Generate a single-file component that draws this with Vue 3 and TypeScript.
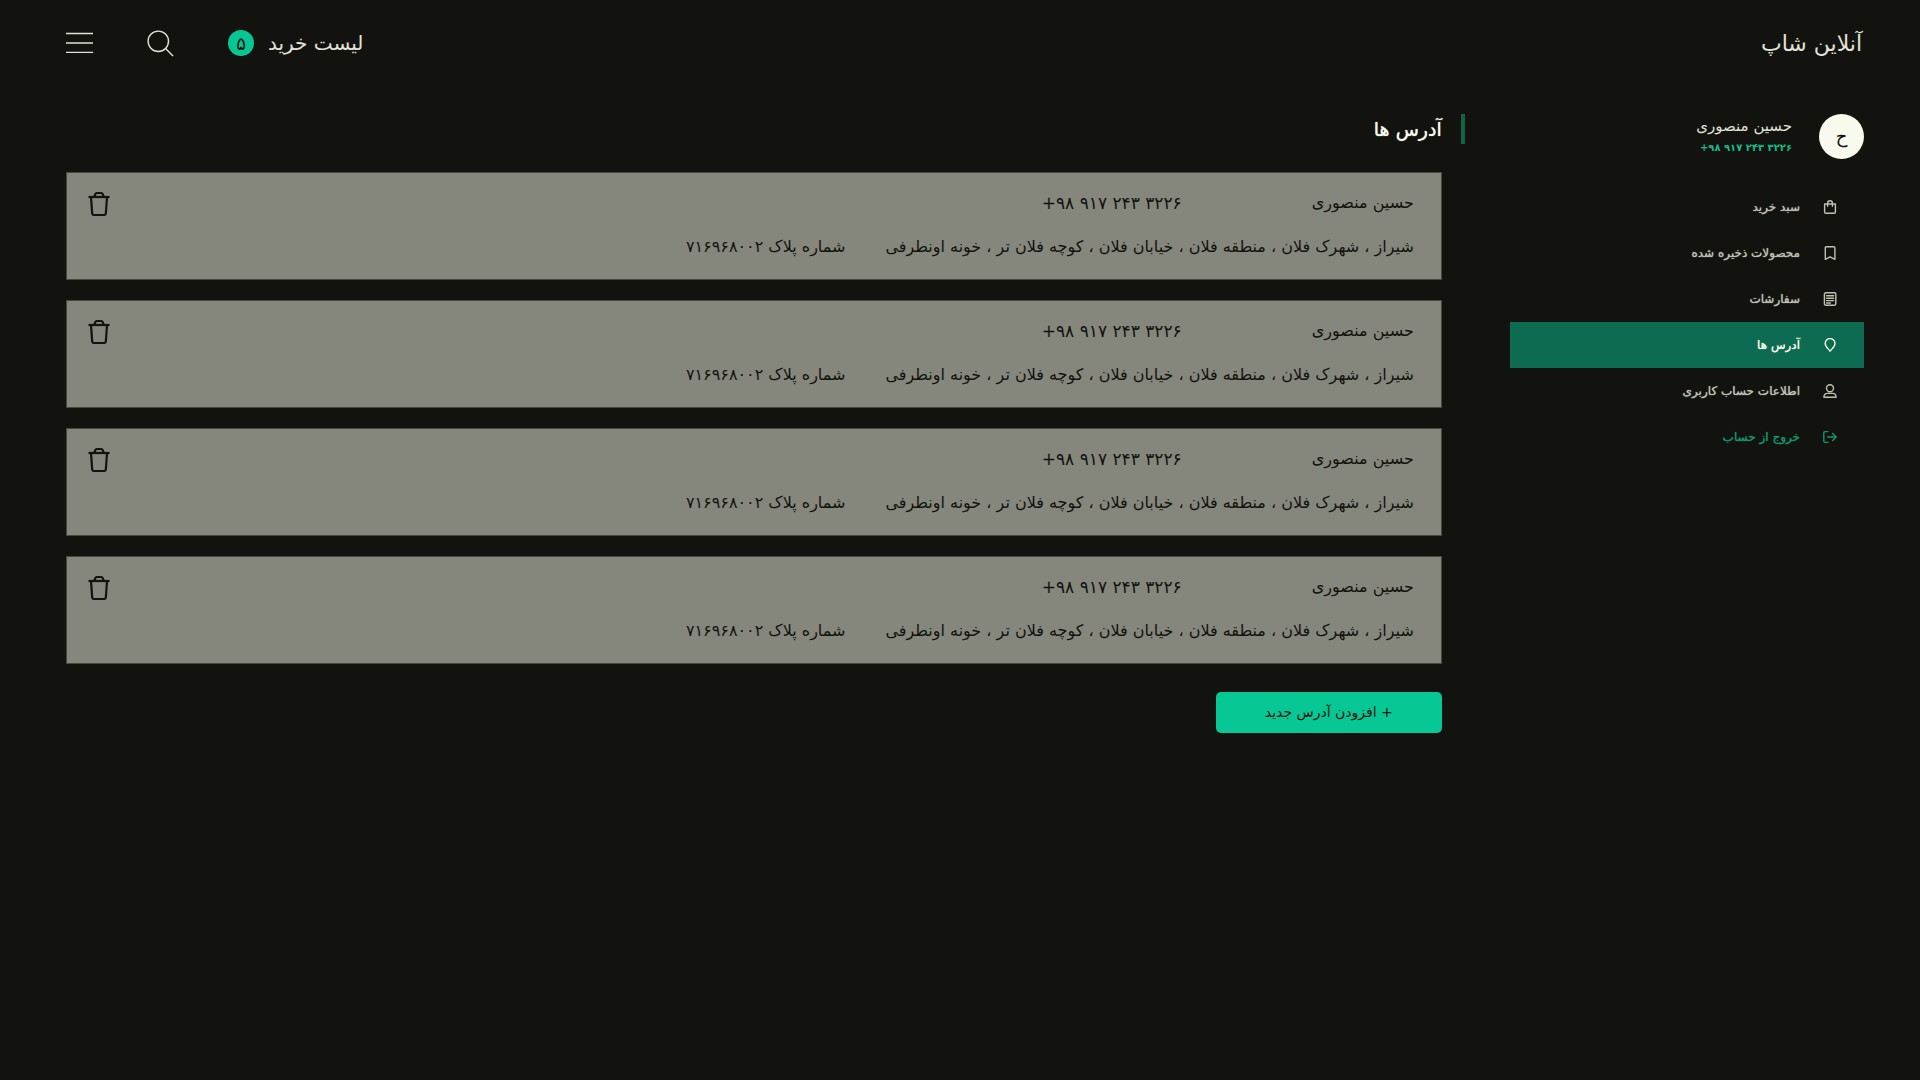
<script setup lang="ts">
interface MenuItem {
  id: string
  label: string
}

interface Address {
  id: number
  name: string
  phone: string
  address: string
  plate: string
}

const userName = 'حسین منصوری'
const userPhone = '+۹۸ ۹۱۷ ۲۴۳ ۳۲۲۶'

const menu: MenuItem[] = [
  { id: 'cart', label: 'سبد خرید' },
  { id: 'saved', label: 'محصولات ذخیره شده' },
  { id: 'orders', label: 'سفارشات' },
  { id: 'addresses', label: 'آدرس ها' },
  { id: 'account', label: 'اطلاعات حساب کاربری' },
  { id: 'logout', label: 'خروج از حساب' },
]

const addresses: Address[] = [1, 2, 3, 4].map((id) => ({
  id,
  name: userName,
  phone: userPhone,
  address: 'شیراز ، شهرک فلان ، منطقه فلان ، خیابان فلان ، کوچه فلان تر ، خونه اونطرفی',
  plate: 'شماره پلاک ۷۱۶۹۶۸۰۰۲',
}))
</script>

<template>
  <div class="page" dir="rtl" lang="fa">
    <header class="header">
      <a class="brand" href="#">آنلاین شاپ</a>
      <div class="tools">
        <a class="basket" href="#">
          <span>لیست خرید</span>
          <span class="count">۵</span>
        </a>
        <button class="icon-button" type="button" aria-label="جستجو">
          <svg width="27" height="27" viewBox="0 0 27 27" fill="none" stroke="currentColor" stroke-width="1.4">
            <circle cx="11.3" cy="11.3" r="10.2" />
            <path d="M18.6 18.6L26 26" />
          </svg>
        </button>
        <button class="icon-button" type="button" aria-label="منو">
          <svg width="27" height="27" viewBox="0 0 27 27" fill="none" stroke="currentColor" stroke-width="1.3">
            <path d="M0 3.5H27M0 13H27M0 22.4H27" />
          </svg>
        </button>
      </div>
    </header>

    <div class="body">
      <aside class="sidebar">
        <div class="profile">
          <span class="avatar">ح</span>
          <div class="identity">
            <span class="user-name">{{ userName }}</span>
            <span class="user-phone" dir="ltr">{{ userPhone }}</span>
          </div>
        </div>
        <nav class="menu">
          <a
            v-for="item in menu"
            :key="item.id"
            href="#"
            class="menu-item"
            :class="{ active: item.id === 'addresses', logout: item.id === 'logout' }"
          >
            <svg width="14" height="14" viewBox="0 0 14 14" fill="none" stroke="currentColor" stroke-width="1.4" stroke-linejoin="round" stroke-linecap="round">
              <template v-if="item.id === 'cart'">
                <path d="M1.6 4H12.4V12Q12.4 13.3 11.1 13.3H2.9Q1.6 13.3 1.6 12Z" />
                <path d="M4.6 6.3V3.2A2.4 2.4 0 0 1 9.4 3.2V6.3" />
              </template>
              <path v-else-if="item.id === 'saved'" d="M2.3 13.3V1.9Q2.3.7 3.5.7H10.7Q11.9.7 11.9 1.9V13.3L7.1 10.8Z" />
              <template v-else-if="item.id === 'orders'">
                <rect x="1.4" y=".8" width="11.4" height="12.4" rx="1.4" />
                <path d="M3.6 3.8H10.6M3.6 6.2H10.6M3.6 8.6H10.6M3.6 11H7.4" />
              </template>
              <path v-else-if="item.id === 'addresses'" d="M7.1 13.2C5.4 10.8 2.2 8.6 2.2 5.4A4.9 4.8 0 0 1 12 5.4C12 8.6 8.8 10.8 7.1 13.2Z" />
              <template v-else-if="item.id === 'account'">
                <circle cx="7" cy="4.3" r="3.5" />
                <path d="M.9 13.3C.9 10.6 2.4 9.4 4.6 9.4H9.4C11.6 9.4 13.1 10.6 13.1 13.3Z" />
              </template>
              <template v-else>
                <path d="M5 1.6H2.2Q.8 1.6.8 3V11Q.8 12.4 2.2 12.4H5" />
                <path d="M4.6 7H13.2M9.6 3.4L13.2 7L9.6 10.6" />
              </template>
            </svg>
            <span>{{ item.label }}</span>
          </a>
        </nav>
      </aside>

      <main class="content">
        <h1 class="title">آدرس ها</h1>
        <ul class="cards">
          <li v-for="entry in addresses" :key="entry.id" class="card">
            <div class="details">
              <div class="row contact">
                <span>{{ entry.name }}</span>
                <span class="phone" dir="ltr">{{ entry.phone }}</span>
              </div>
              <div class="row place">
                <span>{{ entry.address }}</span>
                <span>{{ entry.plate }}</span>
              </div>
            </div>
            <button class="icon-button" type="button" aria-label="حذف آدرس">
              <svg width="22" height="26" viewBox="0 0 22 26" fill="none" stroke="currentColor" stroke-width="2.2" stroke-linejoin="round">
                <path d="M.5 6H21.5" />
                <path d="M3 6L4.2 22.6Q4.4 24 5.8 24H16.2Q17.6 24 17.8 22.6L19 6" />
                <path d="M6.4 6Q7 2 9 2H13Q15 2 15.6 6" />
              </svg>
            </button>
          </li>
        </ul>
        <button class="add" type="button">+ افزودن آدرس جدید</button>
      </main>
    </div>
  </div>
</template>

<style>
body {
  margin: 0;
  background: #12130e;
}
</style>

<style scoped>
.page {
  box-sizing: border-box;
  min-height: 100vh;
  padding: 0 56px 48px 66px;
  background: #12130e;
  color: #e0e3d6;
  font-family: "DejaVu Sans", sans-serif;
}

a {
  color: inherit;
  text-decoration: none;
}

button {
  font-family: inherit;
  border: 0;
  cursor: pointer;
}

.header {
  display: flex;
  align-items: center;
  justify-content: space-between;
  height: 86px;
}

.brand {
  font-size: 22px;
  padding-right: 2px;
}

.tools {
  display: flex;
  align-items: center;
  gap: 54px;
}

.basket {
  display: flex;
  align-items: center;
  gap: 14px;
  font-size: 20px;
}

.count {
  display: flex;
  align-items: center;
  justify-content: center;
  width: 26px;
  height: 26px;
  border-radius: 50%;
  background: #07c795;
  color: #12130e;
  font-size: 18px;
}

.icon-button {
  display: flex;
  padding: 0;
  background: none;
  color: inherit;
}

.body {
  display: flex;
  align-items: flex-start;
  gap: 45px;
  padding-top: 28px;
}

.sidebar {
  flex: 0 0 19.7%;
}

.profile {
  display: flex;
  gap: 27px;
  height: 70px;
}

.avatar {
  display: flex;
  align-items: center;
  justify-content: center;
  width: 45px;
  height: 45px;
  border-radius: 50%;
  background: #f7faec;
  color: #12130e;
  font-size: 18px;
}

.identity {
  display: flex;
  flex-direction: column;
  align-items: flex-start;
}

.user-name {
  font-size: 15px;
  line-height: 24px;
}

.user-phone {
  font-size: 10px;
  font-weight: 700;
  line-height: 20px;
  color: #1cb88d;
}

.menu-item {
  display: flex;
  align-items: center;
  gap: 23px;
  height: 46px;
  padding: 0 27px;
  font-size: 12px;
  color: #bfc1b6;
  text-shadow: 0 0 1px currentColor;
}

.active {
  background: #0c6b50;
  color: #f7faec;
}

.logout {
  color: #159470;
}

.content {
  flex: 1;
  display: flex;
  flex-direction: column;
  align-items: stretch;
}

.title {
  margin: 0 0 28px;
  padding-right: 19px;
  border-right: 4px solid #136349;
  color: #f7faec;
  font-size: 19px;
  font-weight: 400;
  line-height: 30px;
  text-shadow: 0 0 1px currentColor;
}

.cards {
  display: flex;
  flex-direction: column;
  gap: 20px;
  margin: 0 23px 28px 0;
  padding: 0;
  list-style: none;
}

.card {
  display: flex;
  align-items: flex-start;
  justify-content: space-between;
  padding: 18px 21px 20px;
  border: 1px solid #46483f;
  background: #85867c;
  color: #12130e;
}

.details {
  display: flex;
  flex-direction: column;
  gap: 20px;
  padding-right: 6px;
}

.row {
  display: flex;
  font-size: 16px;
  line-height: 24px;
}

.contact {
  gap: 130px;
}

.phone {
  font-size: 17px;
}

.place {
  gap: 40px;
}

.add {
  align-self: flex-start;
  width: 226px;
  height: 41px;
  margin-right: 23px;
  padding: 0 0 2px;
  border-radius: 5px;
  background: #07c795;
  color: #12130e;
  font-size: 14px;
}
</style>
